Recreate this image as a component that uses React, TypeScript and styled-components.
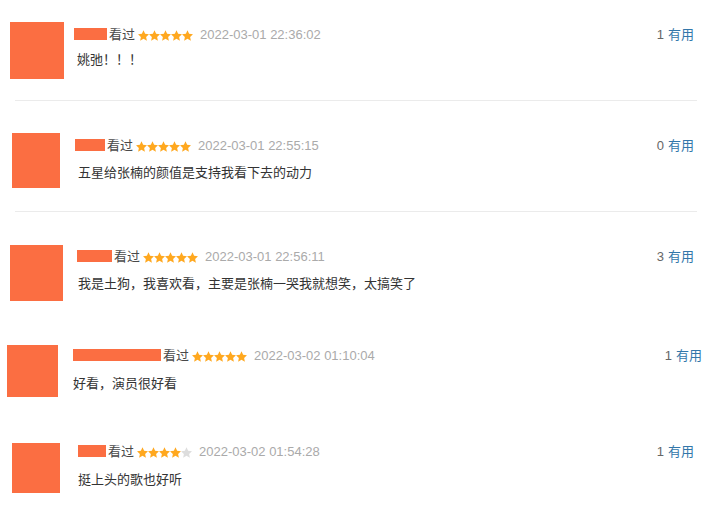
import React from 'react';
import styled, { createGlobalStyle } from 'styled-components';

const GlobalStyle = createGlobalStyle`
  html, body {
    margin: 0;
    padding: 0;
    background: #fff;
  }
  body {
    font-family: "Liberation Sans", Arial, "Noto Sans CJK SC", sans-serif;
    font-size: 13px;
    color: #494949;
  }
`;

const List = styled.div`
  width: 709px;
  display: flex;
  flex-direction: column;
`;

const Comment = styled.div<{ $top: number; $left: number }>`
  display: flex;
  align-items: flex-start;
  margin-top: ${p => p.$top}px;
  padding-left: ${p => p.$left}px;
`;

const Avatar = styled.div<{ $w: number; $h: number }>`
  flex: none;
  width: ${p => p.$w}px;
  height: ${p => p.$h}px;
  background: #fb6e42;
`;

const Body = styled.div<{ $gap: number; $head: number }>`
  flex: 1;
  display: flex;
  flex-direction: column;
  margin-left: ${p => p.$gap}px;
  padding-top: ${p => p.$head}px;
`;

const Header = styled.div`
  display: flex;
  align-items: center;
  height: 18px;
  line-height: 18px;
  white-space: nowrap;
`;

const Name = styled.span<{ $w: number }>`
  display: inline-block;
  width: ${p => p.$w}px;
  height: 12px;
  margin-top: -3px;
  background: #fb6e42;
`;

const Watched = styled.span`
  margin-left: 2px;
  color: #494949;
`;

const Stars = styled.span`
  display: inline-flex;
  margin-left: 3px;
`;

const Time = styled.span`
  margin-left: 7px;
  color: #aaa;
`;

const Votes = styled.span<{ $right: number }>`
  margin-left: auto;
  padding-right: ${p => p.$right}px;
  color: #666;
  a {
    color: #37a;
    text-decoration: none;
    margin-left: 4px;
  }
`;

const Text = styled.div<{ $gap: number; $indent: number }>`
  margin-top: ${p => p.$gap}px;
  padding-left: ${p => p.$indent}px;
  line-height: 18px;
  color: #333;
`;

const Divider = styled.div<{ $top: number }>`
  height: 1px;
  margin: ${p => p.$top}px 12px 0 15px;
  background: #ebebeb;
`;

const Star = ({ on }: { on: boolean }) => (
  <svg width="11" height="11" viewBox="1 1 22 21">
    <path
      d="M12 1.1L15.23 8.15 22.94 9.05 17.23 14.3 18.76 21.9 12 18.1 5.24 21.9 6.77 14.3 1.06 9.05 8.77 8.15z"
      fill={on ? '#ffa81f' : '#ddd'}
    />
  </svg>
);

interface Item {
  top: number;
  left: number;
  aw: number;
  ah: number;
  gap: number;
  head: number;
  name: number;
  stars: number;
  time: string;
  text: string;
  textGap: number;
  indent: number;
  votes: number;
  right: number;
  divider?: number;
}

const items: Item[] = [
  { top: 22, left: 10, aw: 54, ah: 57, gap: 10, head: 4, name: 33, stars: 5, time: '2022-03-01 22:36:02', text: '姚弛！！！', textGap: 7, indent: 3, votes: 1, right: 15, divider: 21 },
  { top: 32, left: 12, aw: 48, ah: 55, gap: 15, head: 4, name: 30, stars: 5, time: '2022-03-01 22:55:15', text: '五星给张楠的颜值是支持我看下去的动力', textGap: 9, indent: 3, votes: 0, right: 15, divider: 23 },
  { top: 33, left: 10, aw: 53, ah: 56, gap: 14, head: 3, name: 35, stars: 5, time: '2022-03-01 22:56:11', text: '我是土狗，我喜欢看，主要是张楠一哭我就想笑，太搞笑了', textGap: 9, indent: 1, votes: 3, right: 15 },
  { top: 44, left: 7, aw: 51, ah: 52, gap: 15, head: 2, name: 88, stars: 5, time: '2022-03-02 01:10:04', text: '好看，演员很好看', textGap: 10, indent: 0, votes: 1, right: 7 },
  { top: 46, left: 12, aw: 48, ah: 50, gap: 18, head: 0, name: 28, stars: 4, time: '2022-03-02 01:54:28', text: '挺上头的歌也好听', textGap: 10, indent: 0, votes: 1, right: 15 },
];

const App = () => {
  return (
    <List>
      <GlobalStyle />
      {items.map((c, idx) => (
        <React.Fragment key={idx}>
          <Comment $top={c.top} $left={c.left}>
            <Avatar $w={c.aw} $h={c.ah} />
            <Body $gap={c.gap} $head={c.head}>
              <Header>
                <Name $w={c.name} />
                <Watched>看过</Watched>
                <Stars>
                  {[0, 1, 2, 3, 4].map(i => <Star key={i} on={i < c.stars} />)}
                </Stars>
                <Time>{c.time}</Time>
                <Votes $right={c.right}>
                  {c.votes}<a href="#">有用</a>
                </Votes>
              </Header>
              <Text $gap={c.textGap} $indent={c.indent}>{c.text}</Text>
            </Body>
          </Comment>
          {c.divider !== undefined && <Divider $top={c.divider} />}
        </React.Fragment>
      ))}
    </List>
  );
};

export default App;
